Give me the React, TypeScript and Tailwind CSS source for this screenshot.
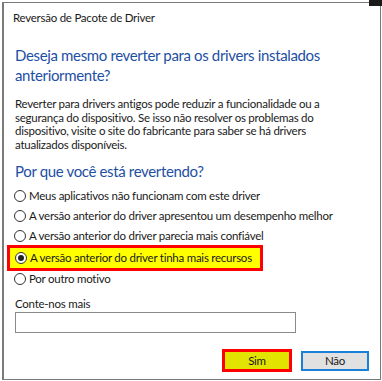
import React from "react";

const options = [
  "Meus aplicativos não funcionam com este driver",
  "A versão anterior do driver apresentou um desempenho melhor",
  "A versão anterior do driver parecia mais confiável",
  "A versão anterior do driver tinha mais recursos",
  "Por outro motivo",
];

const Radio = ({ checked }: { checked?: boolean }) => (
  <span className="w-[12px] h-[12px] rounded-full border border-[#333] bg-white flex items-center justify-center shrink-0">
    {checked && <span className="w-[6px] h-[6px] rounded-full bg-[#222]" />}
  </span>
);

export default function App() {
  return (
    <div className="relative w-[382px] h-[381px] bg-white overflow-hidden font-['Lato',sans-serif] text-[#1a1a1a] text-[11.5px] tracking-[-0.25px]">
      {/* resto de outra janela por trás */}
      <div className="absolute right-0 top-0 w-[13px] h-[6px] bg-[#1a1a1a]" />
      <div className="ml-[2px] mt-[2px] w-[379px] h-[378px] border border-[#7a7a7a] border-l-2 flex flex-col">
        <div className="h-[28px] pl-[9px] pt-[7px] leading-[16px]">Reversão de Pacote de Driver</div>

        <div className="px-[11px] pt-[14px]">
          <h1 className="text-[15px] leading-[20px] tracking-[-0.35px] text-[#1e4fa3] pr-[20px]">
            Deseja mesmo reverter para os drivers instalados anteriormente?
          </h1>
          <p className="mt-[12px] leading-[13.5px] pr-[30px]">
            Reverter para drivers antigos pode reduzir a funcionalidade ou a segurança do dispositivo. Se isso não
            resolver os problemas do dispositivo, visite o site do fabricante para saber se há drivers atualizados
            disponíveis.
          </p>
          <h2 className="mt-[10px] text-[15px] leading-[20px] tracking-[-0.35px] text-[#1e4fa3]">
            Por que você está revertendo?
          </h2>

          <div className="mt-[5px] flex flex-col">
            {options.map((o, i) =>
              i === 3 ? (
                <div
                  key={o}
                  className="-ml-[8px] -mt-[1px] -mb-[2px] w-[256px] h-[26px] border-[3px] border-[#ff0000] bg-[#ffff00] flex items-center gap-[3px] pl-[5px] whitespace-nowrap"
                >
                  <Radio checked />
                  <span>{o}</span>
                </div>
              ) : (
                <div key={o} className="h-[20px] flex items-center gap-[3px] -ml-[1px] whitespace-nowrap">
                  <Radio />
                  <span>{o}</span>
                </div>
              )
            )}
          </div>

          <div className="mt-[7px] leading-[15px]">Conte-nos mais</div>
          <div className="mt-[1px] w-[281px] h-[21px] border border-[#8a8a8a] bg-white" />
        </div>

        <div className="mt-auto mb-[7px] flex items-center justify-end gap-[9px] pr-[11px]">
          <button className="w-[70px] h-[23px] border-[3px] border-[#ff0000] bg-[#e3e300] leading-none">Sim</button>
          <button className="w-[68px] h-[20px] border-2 border-[#1a7fd8] bg-[#e1e1e1] leading-none">Não</button>
        </div>
      </div>
    </div>
  );
}
